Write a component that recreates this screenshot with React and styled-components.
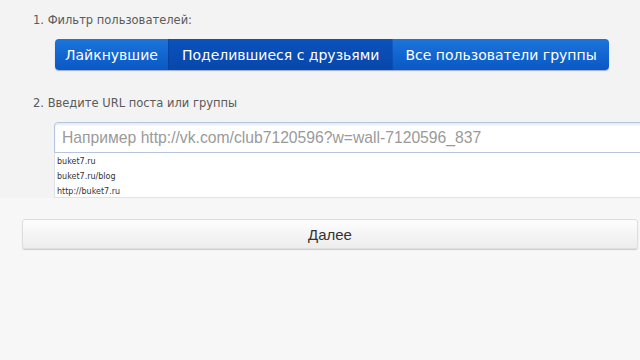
import React, { useState } from "react";
import styled, { createGlobalStyle } from "styled-components";

const GlobalStyle = createGlobalStyle`
  html, body {
    margin: 0;
    padding: 0;
    overflow: hidden;
    background: #f7f7f7;
  }
  * {
    box-sizing: border-box;
  }
`;

const Page = styled.div`
  width: 640px;
  height: 360px;
  overflow: hidden;
  font-family: "DejaVu Sans", Verdana, sans-serif;
`;

const FilterPanel = styled.section`
  background: #f3f3f3;
  padding: 13px 0 0 33px;
  overflow: hidden;
`;

const StepLabel = styled.div`
  font-size: 11.5px;
  line-height: 14px;
  color: #5a5a5a;
  margin-top: ${({ $gap }) => $gap || 0}px;
`;

const Segmented = styled.div`
  display: inline-flex;
  margin: 12px 0 0 22px;
  height: 31px;
  border-radius: 4px;
  overflow: hidden;
  box-shadow: 0 1px 1px rgba(0, 40, 120, 0.35);
`;

const Segment = styled.button`
  border: none;
  margin: 0;
  padding: 0 ${({ $pad }) => $pad}px;
  height: 100%;
  font-family: "DejaVu Sans", Verdana, sans-serif;
  font-size: 14px;
  color: #fff;
  cursor: pointer;
  background: ${({ $active }) =>
    $active
      ? "linear-gradient(#0a52bd, #0847ab)"
      : "linear-gradient(#1b74db, #0a58c4)"};
  border-left: 1px solid rgba(0, 40, 120, 0.25);

  &:first-child {
    border-left: none;
  }
`;

const UrlBlock = styled.div`
  margin: 12px 0 0 21px;
  width: 620px;
`;

const UrlInput = styled.input`
  display: block;
  width: 100%;
  height: 31px;
  padding: 0 7px;
  border: 1px solid #b5c6dc;
  border-radius: 4px 0 0 0;
  background: #fff;
  box-shadow: inset 0 2px 2px rgba(120, 150, 200, 0.2);
  font-family: "Liberation Sans", Arial, sans-serif;
  font-size: 15.7px;
  color: #333;
  outline: none;

  &::placeholder {
    color: #9a9a9a;
  }
`;

const Suggestions = styled.ul`
  list-style: none;
  margin: 0;
  padding: 1px 0 0;
  height: 45px;
  background: #fff;
  border: 1px solid #e2e2e2;
  border-top: none;
  overflow: hidden;
`;

const Suggestion = styled.li`
  padding-left: 2px;
  font-family: "DejaVu Sans", Verdana, sans-serif;
  font-size: 8px;
  line-height: 15px;
  color: #333;
`;

const Footer = styled.div`
  padding: 21px 2px 0 22px;
`;

const NextButton = styled.button`
  display: block;
  width: 100%;
  height: 30px;
  border: 1px solid #dedede;
  border-radius: 3px;
  background: linear-gradient(#fdfdfd, #ededed);
  box-shadow: 0 1px 1px rgba(0, 0, 0, 0.18);
  font-family: "Liberation Sans", Arial, sans-serif;
  font-size: 15px;
  color: #333;
  cursor: pointer;
`;

const filters = [
  { label: "Лайкнувшие", pad: 10 },
  { label: "Поделившиеся с друзьями", pad: 13 },
  { label: "Все пользователи группы", pad: 12 },
];
const suggestions = ["buket7.ru", "buket7.ru/blog", "http://buket7.ru"];

export default function App() {
  const [active, setActive] = useState(1);
  const [url, setUrl] = useState("");

  return (
    <Page>
      <GlobalStyle />
      <FilterPanel>
        <StepLabel>1. Фильтр пользователей:</StepLabel>
        <Segmented>
          {filters.map((f, i) => (
            <Segment
              key={f.label}
              $pad={f.pad}
              $active={i === active}
              onClick={() => setActive(i)}
            >
              {f.label}
            </Segment>
          ))}
        </Segmented>
        <StepLabel $gap={26}>2. Введите URL поста или группы</StepLabel>
        <UrlBlock>
          <UrlInput
            value={url}
            onChange={(e) => setUrl(e.target.value)}
            placeholder="Например http://vk.com/club7120596?w=wall-7120596_837"
          />
          <Suggestions>
            {suggestions.map((s) => (
              <Suggestion key={s}>{s}</Suggestion>
            ))}
          </Suggestions>
        </UrlBlock>
      </FilterPanel>
      <Footer>
        <NextButton>Далее</NextButton>
      </Footer>
    </Page>
  );
}
